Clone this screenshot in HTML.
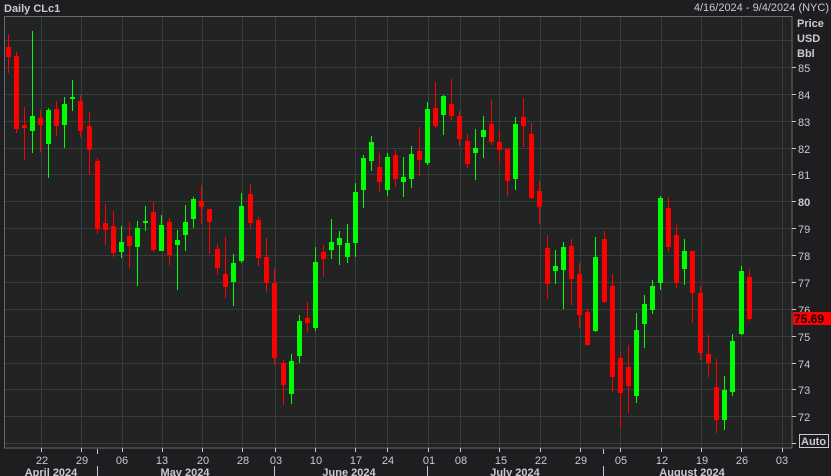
<!DOCTYPE html>
<html><head><meta charset="utf-8"><style>
html,body{margin:0;padding:0;background:#1e1e20;}
svg{display:block;font-family:"Liberation Sans",sans-serif;}
.ax{fill:#c9c9d6;font-size:11px;}
.b{font-weight:bold;}
</style></head><body>
<svg width="831" height="476" viewBox="0 0 831 476" xmlns="http://www.w3.org/2000/svg">
<rect width="831" height="476" fill="#1e1e20"/>
<rect x="4" y="16" width="788" height="432" fill="#222323"/>
<g stroke="#3a3b3b" stroke-width="1">
<line x1="4" x2="792" y1="40.5" y2="40.5"/><line x1="4" x2="792" y1="67.5" y2="67.5"/><line x1="4" x2="792" y1="94.5" y2="94.5"/><line x1="4" x2="792" y1="121.5" y2="121.5"/><line x1="4" x2="792" y1="148.5" y2="148.5"/><line x1="4" x2="792" y1="174.5" y2="174.5"/><line x1="4" x2="792" y1="201.5" y2="201.5"/><line x1="4" x2="792" y1="228.5" y2="228.5"/><line x1="4" x2="792" y1="255.5" y2="255.5"/><line x1="4" x2="792" y1="282.5" y2="282.5"/><line x1="4" x2="792" y1="309.5" y2="309.5"/><line x1="4" x2="792" y1="336.5" y2="336.5"/><line x1="4" x2="792" y1="363.5" y2="363.5"/><line x1="4" x2="792" y1="389.5" y2="389.5"/><line x1="4" x2="792" y1="416.5" y2="416.5"/><line x1="4" x2="792" y1="443.5" y2="443.5"/>
<line y1="16" y2="448" x1="41.5" x2="41.5"/><line y1="16" y2="448" x1="81.5" x2="81.5"/><line y1="16" y2="448" x1="122.5" x2="122.5"/><line y1="16" y2="448" x1="162.5" x2="162.5"/><line y1="16" y2="448" x1="202.5" x2="202.5"/><line y1="16" y2="448" x1="242.5" x2="242.5"/><line y1="16" y2="448" x1="275.5" x2="275.5"/><line y1="16" y2="448" x1="315.5" x2="315.5"/><line y1="16" y2="448" x1="355.5" x2="355.5"/><line y1="16" y2="448" x1="387.5" x2="387.5"/><line y1="16" y2="448" x1="428.5" x2="428.5"/><line y1="16" y2="448" x1="460.5" x2="460.5"/><line y1="16" y2="448" x1="499.5" x2="499.5"/><line y1="16" y2="448" x1="540.5" x2="540.5"/><line y1="16" y2="448" x1="580.5" x2="580.5"/><line y1="16" y2="448" x1="620.5" x2="620.5"/><line y1="16" y2="448" x1="661.5" x2="661.5"/><line y1="16" y2="448" x1="701.5" x2="701.5"/><line y1="16" y2="448" x1="741.5" x2="741.5"/><line y1="16" y2="448" x1="782.5" x2="782.5"/>
</g>
<rect x="4.5" y="16.5" width="787.5" height="431.5" fill="none" stroke="#6a6a6e"/>
<g fill="#ff0000" stroke="#ff0000">
<line x1="8.5" x2="8.5" y1="34" y2="73"/><rect x="6" y="47" width="5" height="10" stroke="none"/>
<line x1="16.5" x2="16.5" y1="52" y2="133"/><rect x="14" y="56" width="5" height="73" stroke="none"/>
<line x1="24.5" x2="24.5" y1="107" y2="160"/><rect x="22" y="125" width="5" height="3" stroke="none"/>
<line x1="40.5" x2="40.5" y1="110" y2="152"/><rect x="38" y="118" width="5" height="7" stroke="none"/>
<line x1="56.5" x2="56.5" y1="101" y2="136"/><rect x="54" y="109" width="5" height="17" stroke="none"/>
<line x1="80.5" x2="80.5" y1="95" y2="137"/><rect x="78" y="101" width="5" height="30" stroke="none"/>
<line x1="89.5" x2="89.5" y1="112" y2="175"/><rect x="87" y="126" width="5" height="24" stroke="none"/>
<line x1="97.5" x2="97.5" y1="158" y2="234"/><rect x="95" y="161" width="5" height="68" stroke="none"/>
<line x1="105.5" x2="105.5" y1="204" y2="245"/><rect x="103" y="223" width="5" height="7" stroke="none"/>
<line x1="113.5" x2="113.5" y1="211" y2="257"/><rect x="111" y="226" width="5" height="27" stroke="none"/>
<line x1="129.5" x2="129.5" y1="222" y2="268"/><rect x="127" y="236" width="5" height="10" stroke="none"/>
<line x1="153.5" x2="153.5" y1="202" y2="252"/><rect x="151" y="212" width="5" height="38" stroke="none"/>
<line x1="169.5" x2="169.5" y1="218" y2="265"/><rect x="167" y="222" width="5" height="33" stroke="none"/>
<line x1="201.5" x2="201.5" y1="185" y2="224"/><rect x="199" y="201" width="5" height="6" stroke="none"/>
<line x1="209.5" x2="209.5" y1="209" y2="254"/><rect x="207" y="209" width="5" height="13" stroke="none"/>
<line x1="217.5" x2="217.5" y1="244" y2="275"/><rect x="215" y="249" width="5" height="19" stroke="none"/>
<line x1="225.5" x2="225.5" y1="237" y2="298"/><rect x="223" y="274" width="5" height="13" stroke="none"/>
<line x1="250.5" x2="250.5" y1="184" y2="229"/><rect x="248" y="194" width="5" height="29" stroke="none"/>
<line x1="258.5" x2="258.5" y1="217" y2="266"/><rect x="256" y="220" width="5" height="38" stroke="none"/>
<line x1="266.5" x2="266.5" y1="238" y2="292"/><rect x="264" y="257" width="5" height="26" stroke="none"/>
<line x1="274.5" x2="274.5" y1="268" y2="365"/><rect x="272" y="283" width="5" height="75" stroke="none"/>
<line x1="283.5" x2="283.5" y1="360" y2="405"/><rect x="281" y="363" width="5" height="22" stroke="none"/>
<line x1="307.5" x2="307.5" y1="302" y2="332"/><rect x="305" y="318" width="5" height="5" stroke="none"/>
<line x1="323.5" x2="323.5" y1="245" y2="277"/><rect x="321" y="252" width="5" height="7" stroke="none"/>
<line x1="379.5" x2="379.5" y1="153" y2="192"/><rect x="377" y="167" width="5" height="15" stroke="none"/>
<line x1="395.5" x2="395.5" y1="150" y2="187"/><rect x="393" y="155" width="5" height="24" stroke="none"/>
<line x1="419.5" x2="419.5" y1="127" y2="176"/><rect x="417" y="151" width="5" height="9" stroke="none"/>
<line x1="435.5" x2="435.5" y1="82" y2="128"/><rect x="433" y="108" width="5" height="18" stroke="none"/>
<line x1="451.5" x2="451.5" y1="79" y2="120"/><rect x="449" y="104" width="5" height="12" stroke="none"/>
<line x1="459.5" x2="459.5" y1="111" y2="146"/><rect x="457" y="116" width="5" height="23" stroke="none"/>
<line x1="467.5" x2="467.5" y1="134" y2="168"/><rect x="465" y="141" width="5" height="23" stroke="none"/>
<line x1="491.5" x2="491.5" y1="100" y2="145"/><rect x="489" y="124" width="5" height="18" stroke="none"/>
<line x1="499.5" x2="499.5" y1="131" y2="162"/><rect x="497" y="142" width="5" height="8" stroke="none"/>
<line x1="507.5" x2="507.5" y1="149" y2="196"/><rect x="505" y="149" width="5" height="32" stroke="none"/>
<line x1="523.5" x2="523.5" y1="98" y2="147"/><rect x="521" y="117" width="5" height="9" stroke="none"/>
<line x1="531.5" x2="531.5" y1="123" y2="199"/><rect x="529" y="134" width="5" height="64" stroke="none"/>
<line x1="539.5" x2="539.5" y1="181" y2="224"/><rect x="537" y="191" width="5" height="16" stroke="none"/>
<line x1="547.5" x2="547.5" y1="235" y2="299"/><rect x="545" y="248" width="5" height="36" stroke="none"/>
<line x1="571.5" x2="571.5" y1="239" y2="305"/><rect x="569" y="246" width="5" height="33" stroke="none"/>
<line x1="579.5" x2="579.5" y1="263" y2="328"/><rect x="577" y="274" width="5" height="41" stroke="none"/>
<line x1="587.5" x2="587.5" y1="309" y2="346"/><rect x="585" y="312" width="5" height="33" stroke="none"/>
<line x1="604.5" x2="604.5" y1="231" y2="303"/><rect x="602" y="239" width="5" height="63" stroke="none"/>
<line x1="612.5" x2="612.5" y1="274" y2="392"/><rect x="610" y="286" width="5" height="91" stroke="none"/>
<line x1="620.5" x2="620.5" y1="351" y2="427"/><rect x="618" y="358" width="5" height="35" stroke="none"/>
<line x1="628.5" x2="628.5" y1="345" y2="413"/><rect x="626" y="367" width="5" height="19" stroke="none"/>
<line x1="668.5" x2="668.5" y1="197" y2="252"/><rect x="666" y="208" width="5" height="39" stroke="none"/>
<line x1="676.5" x2="676.5" y1="225" y2="288"/><rect x="674" y="235" width="5" height="48" stroke="none"/>
<line x1="692.5" x2="692.5" y1="251" y2="323"/><rect x="690" y="251" width="5" height="42" stroke="none"/>
<line x1="700.5" x2="700.5" y1="286" y2="360"/><rect x="698" y="293" width="5" height="60" stroke="none"/>
<line x1="708.5" x2="708.5" y1="335" y2="377"/><rect x="706" y="354" width="5" height="9" stroke="none"/>
<line x1="716.5" x2="716.5" y1="359" y2="433"/><rect x="714" y="387" width="5" height="33" stroke="none"/>
<line x1="749.5" x2="749.5" y1="269" y2="321"/><rect x="747" y="277" width="5" height="42" stroke="none"/>
</g>
<g fill="#00ff00" stroke="#00ff00">
<line x1="32.5" x2="32.5" y1="31" y2="153"/><rect x="30" y="116" width="5" height="15" stroke="none"/>
<line x1="48.5" x2="48.5" y1="108" y2="178"/><rect x="46" y="110" width="5" height="34" stroke="none"/>
<line x1="64.5" x2="64.5" y1="97" y2="148"/><rect x="62" y="104" width="5" height="21" stroke="none"/>
<line x1="72.5" x2="72.5" y1="80" y2="111"/><rect x="70" y="97" width="5" height="2" stroke="none"/>
<line x1="121.5" x2="121.5" y1="226" y2="258"/><rect x="119" y="242" width="5" height="10" stroke="none"/>
<line x1="137.5" x2="137.5" y1="221" y2="286"/><rect x="135" y="228" width="5" height="19" stroke="none"/>
<line x1="145.5" x2="145.5" y1="206" y2="231"/><rect x="143" y="221" width="5" height="2" stroke="none"/>
<line x1="161.5" x2="161.5" y1="215" y2="251"/><rect x="159" y="225" width="5" height="26" stroke="none"/>
<line x1="177.5" x2="177.5" y1="230" y2="290"/><rect x="175" y="240" width="5" height="5" stroke="none"/>
<line x1="185.5" x2="185.5" y1="205" y2="251"/><rect x="183" y="222" width="5" height="13" stroke="none"/>
<line x1="193.5" x2="193.5" y1="197" y2="228"/><rect x="191" y="199" width="5" height="20" stroke="none"/>
<line x1="233.5" x2="233.5" y1="254" y2="306"/><rect x="231" y="263" width="5" height="19" stroke="none"/>
<line x1="241.5" x2="241.5" y1="193" y2="263"/><rect x="239" y="206" width="5" height="55" stroke="none"/>
<line x1="291.5" x2="291.5" y1="354" y2="404"/><rect x="289" y="361" width="5" height="33" stroke="none"/>
<line x1="299.5" x2="299.5" y1="315" y2="363"/><rect x="297" y="321" width="5" height="35" stroke="none"/>
<line x1="315.5" x2="315.5" y1="247" y2="331"/><rect x="313" y="262" width="5" height="66" stroke="none"/>
<line x1="331.5" x2="331.5" y1="219" y2="259"/><rect x="329" y="242" width="5" height="8" stroke="none"/>
<line x1="339.5" x2="339.5" y1="231" y2="265"/><rect x="337" y="238" width="5" height="7" stroke="none"/>
<line x1="347.5" x2="347.5" y1="224" y2="263"/><rect x="345" y="243" width="5" height="14" stroke="none"/>
<line x1="355.5" x2="355.5" y1="183" y2="257"/><rect x="353" y="192" width="5" height="51" stroke="none"/>
<line x1="363.5" x2="363.5" y1="155" y2="208"/><rect x="361" y="158" width="5" height="32" stroke="none"/>
<line x1="371.5" x2="371.5" y1="136" y2="171"/><rect x="369" y="142" width="5" height="19" stroke="none"/>
<line x1="387.5" x2="387.5" y1="153" y2="196"/><rect x="385" y="157" width="5" height="33" stroke="none"/>
<line x1="403.5" x2="403.5" y1="157" y2="197"/><rect x="401" y="177" width="5" height="5" stroke="none"/>
<line x1="411.5" x2="411.5" y1="146" y2="188"/><rect x="409" y="154" width="5" height="25" stroke="none"/>
<line x1="427.5" x2="427.5" y1="102" y2="165"/><rect x="425" y="109" width="5" height="54" stroke="none"/>
<line x1="443.5" x2="443.5" y1="95" y2="135"/><rect x="441" y="96" width="5" height="19" stroke="none"/>
<line x1="475.5" x2="475.5" y1="129" y2="180"/><rect x="473" y="148" width="5" height="5" stroke="none"/>
<line x1="483.5" x2="483.5" y1="116" y2="158"/><rect x="481" y="130" width="5" height="7" stroke="none"/>
<line x1="515.5" x2="515.5" y1="117" y2="190"/><rect x="513" y="124" width="5" height="55" stroke="none"/>
<line x1="555.5" x2="555.5" y1="250" y2="284"/><rect x="553" y="266" width="5" height="5" stroke="none"/>
<line x1="563.5" x2="563.5" y1="242" y2="309"/><rect x="561" y="247" width="5" height="23" stroke="none"/>
<line x1="595.5" x2="595.5" y1="237" y2="332"/><rect x="593" y="257" width="5" height="74" stroke="none"/>
<line x1="636.5" x2="636.5" y1="313" y2="403"/><rect x="634" y="330" width="5" height="66" stroke="none"/>
<line x1="644.5" x2="644.5" y1="295" y2="348"/><rect x="642" y="304" width="5" height="20" stroke="none"/>
<line x1="652.5" x2="652.5" y1="280" y2="314"/><rect x="650" y="286" width="5" height="24" stroke="none"/>
<line x1="660.5" x2="660.5" y1="196" y2="290"/><rect x="658" y="198" width="5" height="85" stroke="none"/>
<line x1="684.5" x2="684.5" y1="239" y2="285"/><rect x="682" y="251" width="5" height="18" stroke="none"/>
<line x1="724.5" x2="724.5" y1="376" y2="430"/><rect x="722" y="390" width="5" height="30" stroke="none"/>
<line x1="732.5" x2="732.5" y1="334" y2="396"/><rect x="730" y="341" width="5" height="51" stroke="none"/>
<line x1="741.5" x2="741.5" y1="266" y2="335"/><rect x="739" y="271" width="5" height="63" stroke="none"/>
</g>
<text x="4" y="12" class="ax b" font-size="11">Daily CLc1</text>
<text x="829" y="11" class="ax" text-anchor="end" font-size="11">4/16/2024 - 9/4/2024 (NYC)</text>
<text x="797" y="27" class="ax b">Price</text>
<text x="797" y="42" class="ax b">USD</text>
<text x="797" y="57" class="ax b">Bbl</text>
<g stroke="#c9c9d6"><line x1="792" x2="796" y1="67.5" y2="67.5"/><line x1="792" x2="796" y1="94.5" y2="94.5"/><line x1="792" x2="796" y1="121.5" y2="121.5"/><line x1="792" x2="796" y1="148.5" y2="148.5"/><line x1="792" x2="796" y1="174.5" y2="174.5"/><line x1="792" x2="796" y1="201.5" y2="201.5"/><line x1="792" x2="796" y1="228.5" y2="228.5"/><line x1="792" x2="796" y1="255.5" y2="255.5"/><line x1="792" x2="796" y1="282.5" y2="282.5"/><line x1="792" x2="796" y1="309.5" y2="309.5"/><line x1="792" x2="796" y1="336.5" y2="336.5"/><line x1="792" x2="796" y1="363.5" y2="363.5"/><line x1="792" x2="796" y1="389.5" y2="389.5"/><line x1="792" x2="796" y1="416.5" y2="416.5"/><line x1="792" x2="796" y1="443.5" y2="443.5"/></g>
<g class="ax" font-size="12">
<text x="798" y="72">85</text><text x="798" y="99">84</text><text x="798" y="126">83</text><text x="798" y="153">82</text><text x="798" y="179">81</text><text x="798" y="206" class="b">80</text><text x="798" y="233">79</text><text x="798" y="260">78</text><text x="798" y="287">77</text><text x="798" y="314">76</text><text x="798" y="341">75</text><text x="798" y="368">74</text><text x="798" y="394">73</text><text x="798" y="421">72</text>
</g>
<rect x="793" y="312" width="38" height="13" fill="#ff0000"/>
<text x="794" y="323" fill="#000" font-size="12" font-weight="bold">75.69</text>
<rect x="799.5" y="434.5" width="29" height="13" fill="#1e1e20" stroke="#c9c9d6"/>
<text x="801" y="445" class="ax b">Auto</text>
<g stroke="#c9c9d6"><line x1="41.5" x2="41.5" y1="448" y2="452"/><line x1="81.5" x2="81.5" y1="448" y2="452"/><line x1="122.5" x2="122.5" y1="448" y2="452"/><line x1="162.5" x2="162.5" y1="448" y2="452"/><line x1="202.5" x2="202.5" y1="448" y2="452"/><line x1="242.5" x2="242.5" y1="448" y2="452"/><line x1="275.5" x2="275.5" y1="448" y2="452"/><line x1="315.5" x2="315.5" y1="448" y2="452"/><line x1="355.5" x2="355.5" y1="448" y2="452"/><line x1="387.5" x2="387.5" y1="448" y2="452"/><line x1="428.5" x2="428.5" y1="448" y2="452"/><line x1="460.5" x2="460.5" y1="448" y2="452"/><line x1="499.5" x2="499.5" y1="448" y2="452"/><line x1="540.5" x2="540.5" y1="448" y2="452"/><line x1="580.5" x2="580.5" y1="448" y2="452"/><line x1="620.5" x2="620.5" y1="448" y2="452"/><line x1="661.5" x2="661.5" y1="448" y2="452"/><line x1="701.5" x2="701.5" y1="448" y2="452"/><line x1="741.5" x2="741.5" y1="448" y2="452"/><line x1="782.5" x2="782.5" y1="448" y2="452"/>
<line x1="97.5" x2="97.5" y1="449" y2="454"/><line x1="97.5" x2="97.5" y1="466" y2="476"/><line x1="274.5" x2="274.5" y1="466" y2="476"/><line x1="603.5" x2="603.5" y1="449" y2="454"/><line x1="603.5" x2="603.5" y1="466" y2="476"/><line x1="427.5" x2="427.5" y1="466" y2="476"/></g>
<g class="ax" font-size="12" text-anchor="middle">
<text x="42" y="464">22</text><text x="82" y="464">29</text><text x="122" y="464">06</text><text x="162" y="464">13</text><text x="203" y="464">20</text><text x="243" y="464">28</text><text x="276" y="464">03</text><text x="316" y="464">10</text><text x="356" y="464">17</text><text x="388" y="464">24</text><text x="429" y="464">01</text><text x="461" y="464">08</text><text x="501" y="464">15</text><text x="541" y="464">22</text><text x="581" y="464">29</text><text x="621" y="464">05</text><text x="662" y="464">12</text><text x="702" y="464">19</text><text x="742" y="464">26</text><text x="782" y="464">03</text>
</g>
<g class="ax b" font-size="12" text-anchor="middle">
<text x="51" y="476">April 2024</text><text x="185" y="476">May 2024</text><text x="349" y="476">June 2024</text><text x="515" y="476">July 2024</text><text x="692" y="476">August 2024</text>
</g>
</svg>
</body></html>
